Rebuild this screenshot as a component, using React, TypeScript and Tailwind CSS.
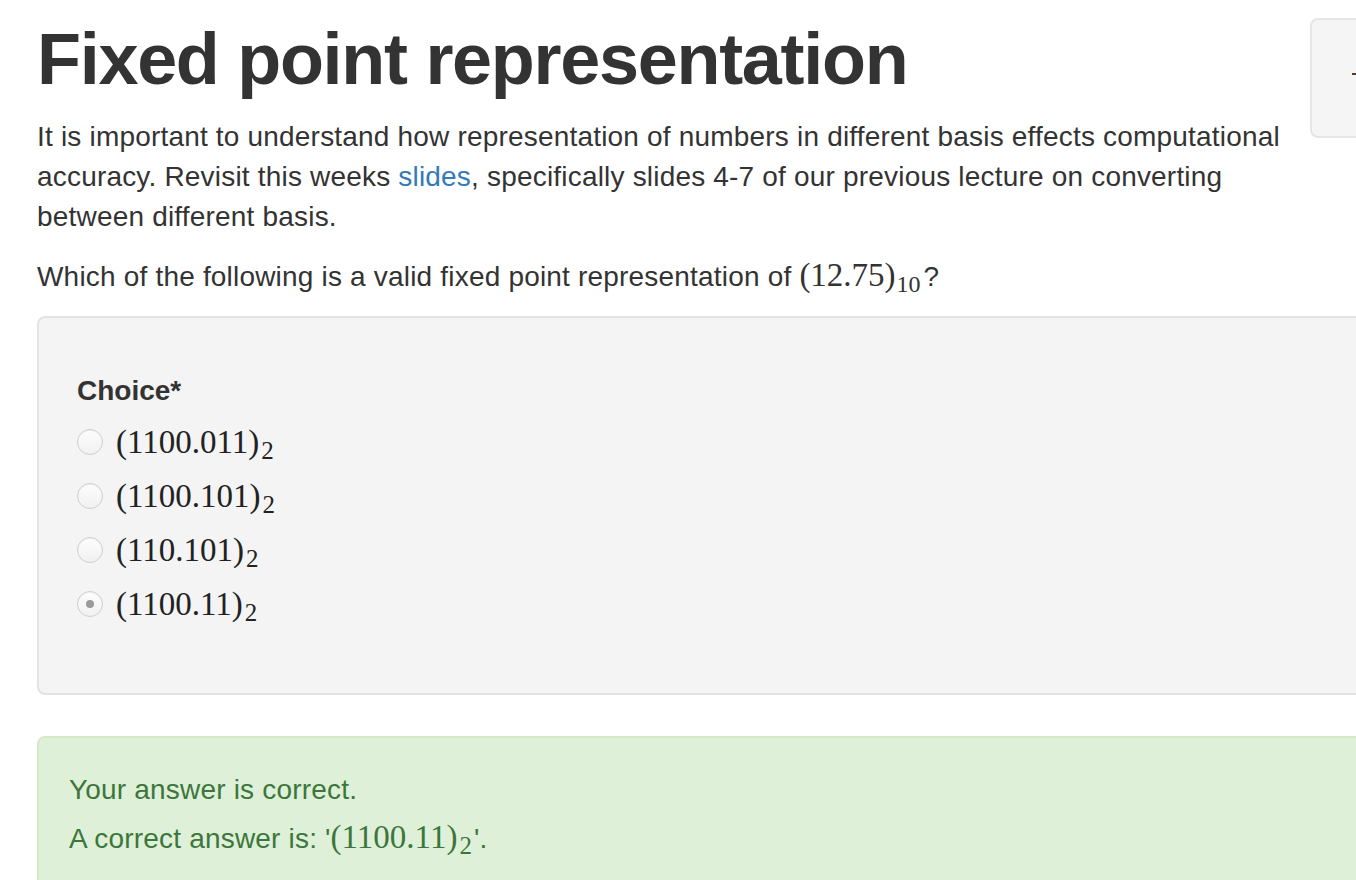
import React from "react";

function Radio({ checked }: { checked?: boolean }) {
  return (
    <span className="flex h-[26px] w-[26px] shrink-0 items-center justify-center rounded-full border border-[#cfcfcf] bg-gradient-to-b from-[#fdfdfd] to-[#f1f1f1] shadow-[inset_0_1px_1px_rgba(0,0,0,0.06)]">
      {checked && <span className="h-[8px] w-[8px] rounded-full bg-[#9a9a9a]" />}
    </span>
  );
}

function Bin({ v, sub }: { v: string; sub: string }) {
  return (
    <span className="font-['Liberation_Serif','Times_New_Roman',serif] text-[33px] leading-none text-[#222]">
      ({v})<sub className="relative top-[6px] ml-[2px] align-baseline text-[25px]">{sub}</sub>
    </span>
  );
}

export default function App() {
  const choices = [
    { v: "1100.011", checked: false },
    { v: "1100.101", checked: false },
    { v: "110.101", checked: false },
    { v: "1100.11", checked: true },
  ];
  return (
    <div className="h-[880px] w-[1356px] overflow-hidden bg-white font-['Liberation_Sans',Arial,sans-serif] text-[#333]">
      <div className="flex pl-[37px] pt-[18px]">
        <div className="w-[1262px] shrink-0">
          <h1 className="mt-[2px] text-[72px] font-bold leading-[79px] tracking-[-1.3px] text-[#333]">
            Fixed point representation
          </h1>
          <p className="mt-[18px] text-[28px] leading-[40px] tracking-[0.19px]">
            It is important to understand how representation of numbers in different basis effects computational
            accuracy. Revisit this weeks <span className="text-[#337ab7]">slides</span>, specifically slides 4-7 of our
            previous lecture on converting between different basis.
          </p>
          <p className="mt-[20px] text-[28px] leading-[40px] tracking-[0.19px]">
            Which of the following is a valid fixed point representation of{" "}
            <span className="font-['Liberation_Serif','Times_New_Roman',serif] text-[33px] leading-none tracking-normal">
              (12.75)<sub className="relative top-[6px] ml-[1px] mr-[3px] align-baseline text-[24px]">10</sub>
            </span>
            ?
          </p>
        </div>
        <div className="ml-[11px] flex h-[120px] w-[120px] shrink-0 items-center rounded-[8px] border-2 border-[#e6e6e6] bg-[#f5f5f5] pl-[40px]">
          <span className="mt-[-8px] h-[2px] w-[4px] bg-[#5a3a2a]" />
        </div>
      </div>

      <div className="ml-[37px] mt-[19px] h-[379px] w-[1400px] rounded-[8px] border-2 border-[#e3e3e3] bg-[#f4f4f4] pl-[38px] pt-[53px]">
        <div className="text-[28px] font-bold leading-[40px] text-[#333]">Choice*</div>
        <div className="mt-[4px] flex flex-col">
          {choices.map((c) => (
            <div key={c.v} className="flex h-[54px] items-center gap-[13px]">
              <Radio checked={c.checked} />
              <Bin v={c.v} sub="2" />
            </div>
          ))}
        </div>
      </div>

      <div className="ml-[37px] mt-[41px] h-[200px] w-[1400px] rounded-[8px] border-2 border-[#d6e9c6] bg-[#dff0d8] pl-[30px] pt-[32px] text-[28px] leading-[40px] tracking-[0.19px] text-[#3c763d]">
        <p>Your answer is correct.</p>
        <p className="mt-[9px]">
          A correct answer is: '
          <span className="font-['Liberation_Serif','Times_New_Roman',serif] text-[33px] leading-none tracking-normal">
            (1100.11)<sub className="relative top-[6px] ml-[2px] mr-[2px] align-baseline text-[25px]">2</sub>
          </span>
          '.
        </p>
      </div>
    </div>
  );
}
